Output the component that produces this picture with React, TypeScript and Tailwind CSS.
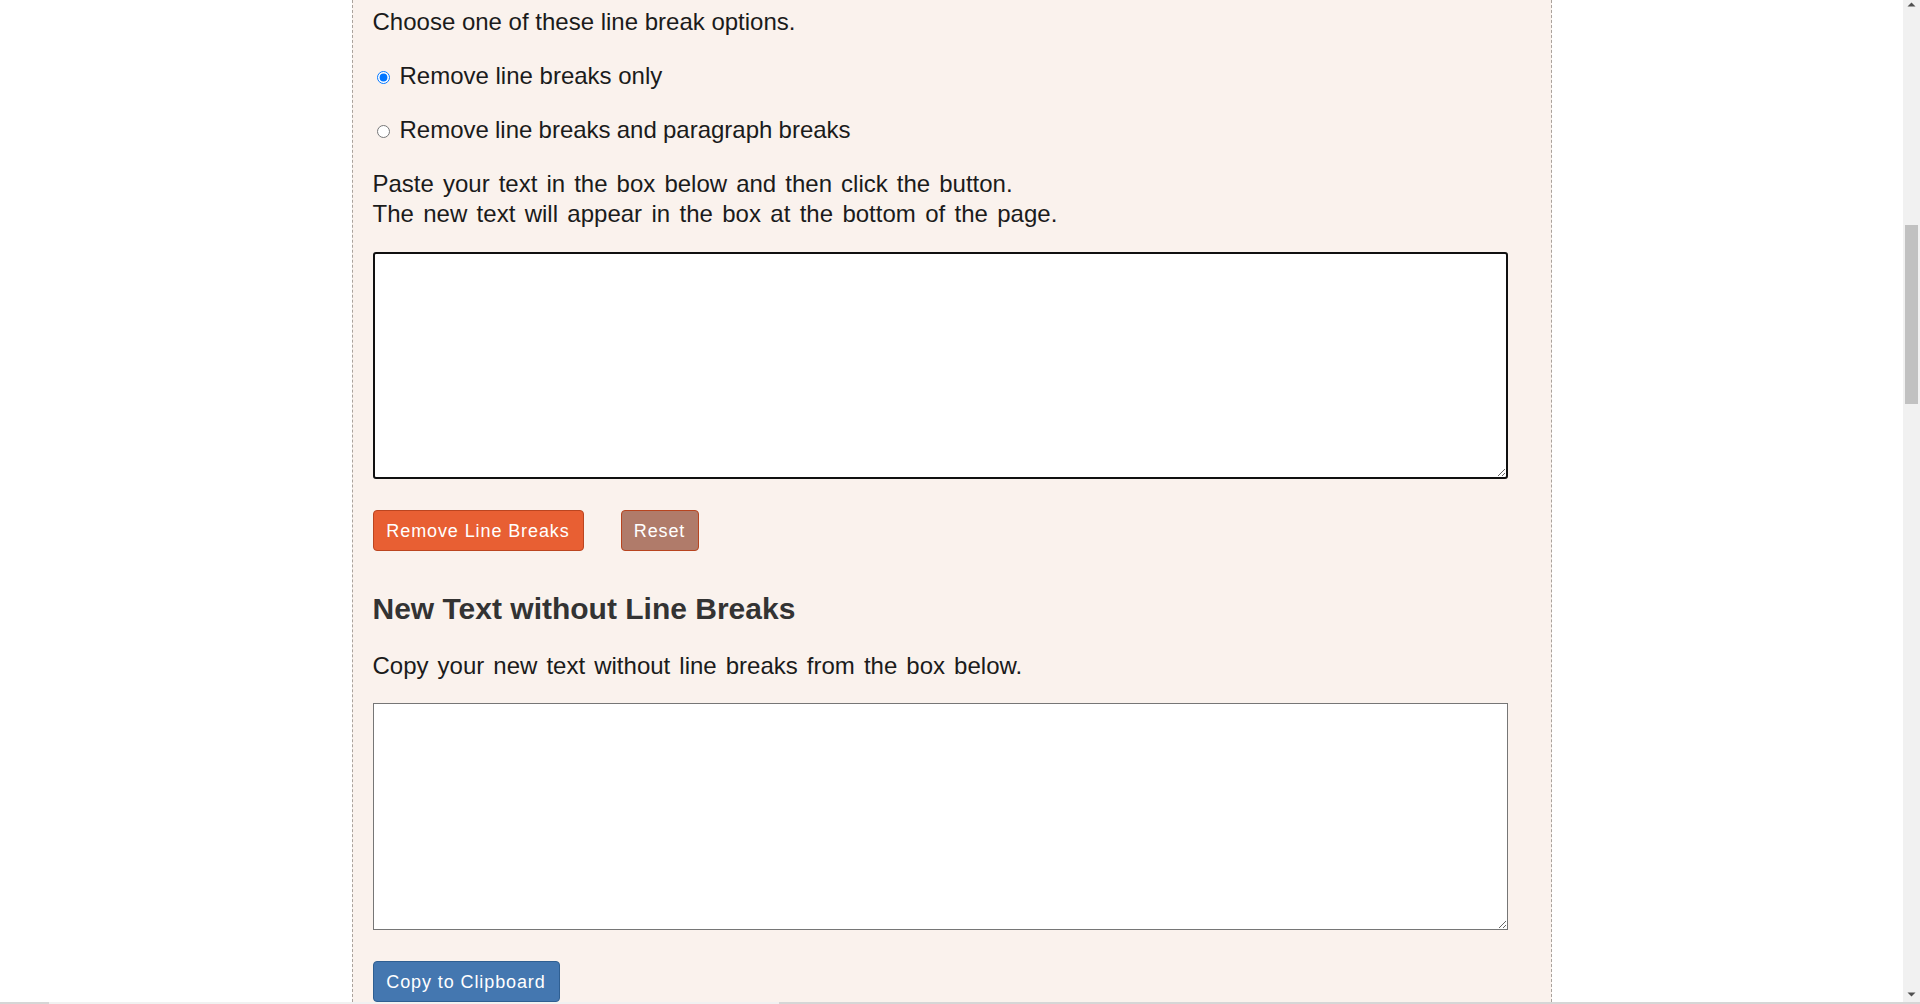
import { useState } from "react";

function Scrollbar() {
  return (
    <div className="w-[17px] shrink-0 bg-[#f1f1f1] flex flex-col items-center">
      <svg width="17" height="17" viewBox="0 0 17 17" className="shrink-0">
        <path d="M4.5 6.5 L8.5 2.5 L12.5 6.5 Z" fill="#505050" />
      </svg>
      <div className="mt-[208px] h-[179px] w-[13px] bg-[#c1c1c1]" />
      <div className="flex-1" />
      <svg width="17" height="17" viewBox="0 0 17 17" className="shrink-0">
        <path d="M4.5 7.5 L12.5 7.5 L8.5 11.5 Z" fill="#505050" />
      </svg>
    </div>
  );
}

export default function App() {
  const [mode, setMode] = useState("lines");

  return (
    <div className="h-[1004px] w-[1920px] overflow-hidden flex flex-col bg-white font-['Liberation_Sans',Arial,sans-serif]">
      <div className="flex flex-1 min-h-0">
        <main className="flex-1 flex justify-center overflow-hidden">
          <div className="w-[1200px] shrink-0 border-x border-dashed border-[#aaa39d] bg-[#faf2ed] pl-[20px] pt-[7px] text-[24px] leading-[30px] text-[#1b1b1b]">
            <p>Choose one of these line break options.</p>

            <label className="mt-[24px] flex h-[30px] items-center">
              <input
                type="radio"
                name="mode"
                checked={mode === "lines"}
                onChange={() => setMode("lines")}
                className="ml-[4px] mr-[10px] mt-[2px] h-[13px] w-[13px]"
              />
              Remove line breaks only
            </label>

            <label className="mt-[24px] flex h-[30px] items-center">
              <input
                type="radio"
                name="mode"
                checked={mode === "paragraphs"}
                onChange={() => setMode("paragraphs")}
                className="ml-[4px] mr-[10px] mt-[2px] h-[13px] w-[13px]"
              />
              <span className="[word-spacing:-0.5px]">Remove line breaks and paragraph breaks</span>
            </label>

            <p className="mt-[24px]">
              <span className="[word-spacing:2.4px]">Paste your text in the box below and then click the button.</span>
              <br />
              <span className="[word-spacing:2.7px]">The new text will appear in the box at the bottom of the page.</span>
            </p>

            <textarea className="mt-[23px] block h-[227px] w-[1135px] rounded-[3px] border-2 border-[#101010] bg-white outline-none" />

            <div className="mt-[31px] flex gap-[37px]">
              <button className="h-[41px] w-[211px] rounded-[4px] border border-[#bb4520] bg-[#e85f33] text-[18px] tracking-[0.9px] text-white">
                Remove Line Breaks
              </button>
              <button className="h-[41px] w-[78px] rounded-[4px] border border-[#b8441f] bg-[#b07b6a] text-[18px] tracking-[0.9px] text-white">
                Reset
              </button>
            </div>

            <h2 className="mt-[40px] text-[30px] font-bold leading-[36px] text-[#333333]">
              New Text without Line Breaks
            </h2>

            <p className="mt-[24px] [word-spacing:2.4px]">Copy your new text without line breaks from the box below.</p>

            <textarea
              readOnly
              className="mt-[22px] block h-[227px] w-[1135px] border border-[#767676] bg-white outline-none"
            />

            <button className="mt-[31px] h-[41px] w-[187px] rounded-[4px] border border-[#2f5f92] bg-[#4477b0] text-[18px] tracking-[0.9px] text-white">
              Copy to Clipboard
            </button>
          </div>
        </main>
        <Scrollbar />
      </div>
      <div className="flex h-[2px] shrink-0 bg-[#d6d6d6]">
        <div className="ml-[49px] w-[730px] bg-[#f1f1f1]" />
      </div>
    </div>
  );
}
